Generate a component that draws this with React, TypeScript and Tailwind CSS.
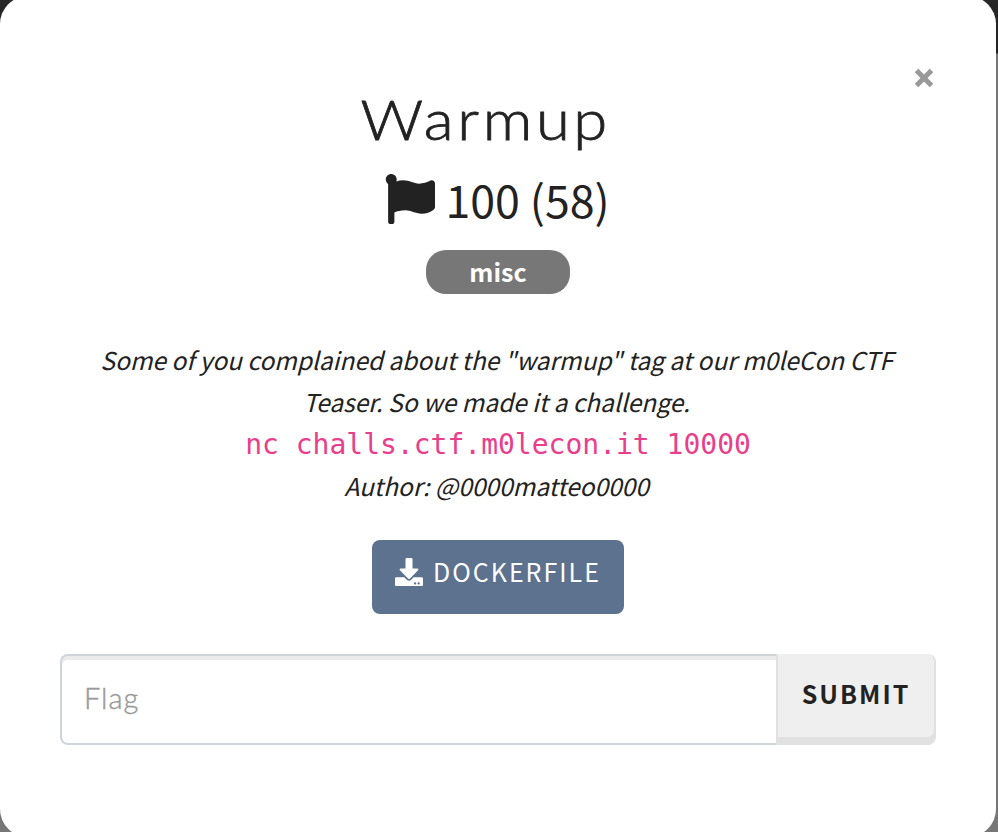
import { FaDownload, FaFlag } from "react-icons/fa";

const sans = "font-['Noto_Sans_CJK_SC','Source_Sans_Pro',sans-serif]";

export default function App() {
  return (
    <div className="h-[832px] w-[998px] overflow-hidden bg-[linear-gradient(#282828_0px,#222_53px,#777_54px,#777_100%)]">
      <main
        className={`-mt-1 flex h-[841px] w-[996px] flex-col items-center rounded-[28px] bg-white text-[#222] ${sans}`}
      >
        <div className="flex h-[85px] w-full items-end justify-end pr-[63px]">
          <button aria-label="Close" className="-mb-[6px] flex size-[18px] items-center justify-center text-[#999]">
            <svg viewBox="0 0 18 18" className="size-[18px]" fill="none" stroke="currentColor" strokeWidth="5">
              <path d="M1.5 1.5L16.5 16.5M16.5 1.5L1.5 16.5" />
            </svg>
          </button>
        </div>
        <h1 className="mr-[24px] h-[84px] scale-x-110 whitespace-nowrap font-['Lato',sans-serif] text-[56px] leading-[76px] font-light tracking-[3.3px] [-webkit-text-stroke:0.8px_#222]">
          Warmup
        </h1>
        <div className="flex h-[72px] items-center gap-[10px] pr-[1px] text-[44.7px] leading-[72px] whitespace-nowrap">
          <FaFlag className="-mt-[4px] size-[50px]" />
          <span className="-mt-[5px]">100 (58)</span>
        </div>
        <div className="mt-[13px] flex h-[44px] w-[144px] items-center justify-center rounded-[20px] bg-[#777] text-[25px] leading-[42px] font-bold text-white">
          <span className="-mt-[2px]">misc</span>
        </div>
        <div className="mt-[45px] flex flex-col items-center text-[24.5px] leading-[42px] tracking-[-0.03px] whitespace-nowrap">
          <p className="h-[42px] pr-[3px] italic">Some of you complained about the "warmup" tag at our m0leCon CTF</p>
          <p className="h-[42px] pr-[3px] italic">Teaser. So we made it a challenge.</p>
          <code className="h-[42px] pt-[1px] font-['DejaVu_Sans_Mono',monospace] text-[28px] leading-[42px] tracking-normal text-[#e83e8c]">
            nc challs.ctf.m0lecon.it 10000
          </code>
          <p className="h-[42px] pr-[3px] italic">Author: @0000matteo0000</p>
        </div>
        <button className="mt-[33px] flex h-[74px] w-[252px] items-start justify-center rounded-[8px] bg-[#5c728f] pt-[11px] text-white">
          <span className="flex h-[40px] items-center gap-[10px] text-[25px] leading-[40px] font-normal tracking-[2px]">
            <FaDownload className="size-[28px] translate-y-px" />
            DOCKERFILE
          </span>
        </button>
        <form className="mt-[40px] flex h-[91px] w-[876px]">
          <input
            placeholder="Flag"
            className="h-[91px] w-[716px] rounded-l-[8px] border-2 border-r-0 border-[#ced4da] bg-white px-[22px] pb-[4px] font-['Lato',sans-serif] text-[29px] font-light tracking-[1px] shadow-[inset_0_4px_0_#ebebeb] [-webkit-text-stroke:0.4px_#999] placeholder:text-[#999]"
          />
          <button
            type="button"
            className="flex h-[91px] w-[160px] items-start justify-center rounded-r-[8px] border-x-2 border-[#e1e1e1] bg-[#efefef] pt-[19px] text-[25px] leading-[40px] font-bold tracking-[2px] shadow-[inset_0_-8px_0_#e1e1e1]"
          >
            SUBMIT
          </button>
        </form>
      </main>
    </div>
  );
}
